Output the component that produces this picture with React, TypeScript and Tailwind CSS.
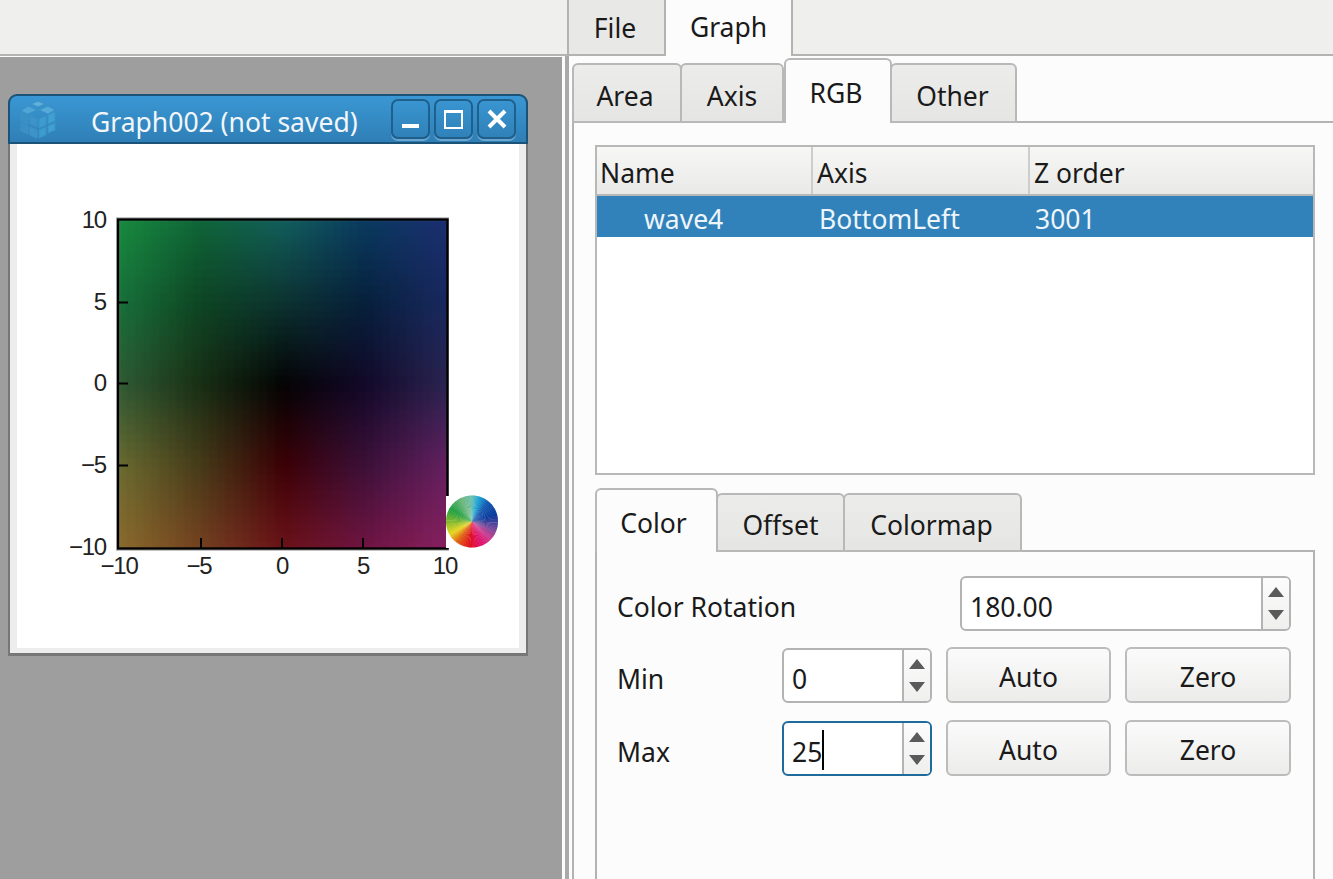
import type { ReactNode } from "react";

// colour samples of the plot, rows from y=10 down to y=-10, cols x=-10..10
const samples = [
  ["#178a3e", "#0f6538", "#125e5c", "#0a3a60", "#1a2e70"],
  ["#17703a", "#0d4523", "#0c3330", "#06203c", "#18285e"],
  ["#2f5a34", "#182e14", "#030303", "#120828", "#2a2450"],
  ["#6a6a30", "#463a18", "#3c0005", "#3c1038", "#642060"],
  ["#8a6a2c", "#74401f", "#6b1218", "#701442", "#87205f"],
];

function toRgb(hex: string) {
  return [1, 3, 5].map((i) => parseInt(hex.slice(i, i + 2), 16));
}

function mix(a: number[], b: number[], t: number) {
  return a.map((v, i) => v + (b[i] - v) * t);
}

function cellColor(u: number, v: number) {
  const cx = Math.min(u * 4, 3.999);
  const cy = Math.min(v * 4, 3.999);
  const ix = Math.floor(cx);
  const iy = Math.floor(cy);
  const top = mix(toRgb(samples[iy][ix]), toRgb(samples[iy][ix + 1]), cx - ix);
  const bot = mix(toRgb(samples[iy + 1][ix]), toRgb(samples[iy + 1][ix + 1]), cx - ix);
  const c = mix(top, bot, cy - iy).map(Math.round);
  return `rgb(${c[0]},${c[1]},${c[2]})`;
}

const CELLS = 40;
const heatCells = Array.from({ length: CELLS * CELLS }, (_, i) => ({
  x: i % CELLS,
  y: Math.floor(i / CELLS),
}));

// colour wheel stops, clockwise from the top
const wheelStops: [number, string][] = [
  [0, "#6fc0b4"],
  [15, "#1fa8d8"],
  [40, "#1458b0"],
  [75, "#0a3a9c"],
  [110, "#7a4a9a"],
  [135, "#d03a90"],
  [160, "#e0106a"],
  [185, "#e01020"],
  [215, "#e06010"],
  [240, "#e8d820"],
  [270, "#80b830"],
  [300, "#20a040"],
  [335, "#70b880"],
  [360, "#6fc0b4"],
];

function wheelColor(deg: number) {
  for (let i = 0; i < wheelStops.length - 1; i++) {
    const [a, ca] = wheelStops[i];
    const [b, cb] = wheelStops[i + 1];
    if (deg >= a && deg <= b) {
      const c = mix(toRgb(ca), toRgb(cb), (deg - a) / (b - a)).map(Math.round);
      return `rgb(${c[0]},${c[1]},${c[2]})`;
    }
  }
  return "#fff";
}

function wedgePath(cx: number, cy: number, r: number, from: number, to: number) {
  const p = (d: number) => {
    const a = ((d - 90) * Math.PI) / 180;
    return `${cx + r * Math.cos(a)} ${cy + r * Math.sin(a)}`;
  };
  return `M${cx} ${cy}L${p(from)}A${r} ${r} 0 0 1 ${p(to)}Z`;
}

function Plot() {
  const xLabels = [
    { x: 119, t: "−10" },
    { x: 199, t: "−5" },
    { x: 282, t: "0" },
    { x: 363, t: "5" },
    { x: 445, t: "10" },
  ];
  const yLabels = [
    { y: 228, t: "10" },
    { y: 310, t: "5" },
    { y: 391, t: "0" },
    { y: 473, t: "−5" },
    { y: 555, t: "−10" },
  ];
  return (
    <svg viewBox="17 144 503 504" className="block w-[503px] h-[504px]">
      <defs>
        <filter id="soft" x="-5%" y="-5%" width="110%" height="110%" colorInterpolationFilters="sRGB">
          <feGaussianBlur stdDeviation="1.6" />
        </filter>
        <filter id="softWheel" colorInterpolationFilters="sRGB">
          <feGaussianBlur stdDeviation="0.6" />
        </filter>
        <clipPath id="frame">
          <rect x="118" y="219" width="330" height="330" />
        </clipPath>
      </defs>
      <rect x="116" y="217" width="333" height="334" fill="#c4c4c4" />
      <g clipPath="url(#frame)">
        <g filter="url(#soft)" shapeRendering="crispEdges">
          {heatCells.map((c) => (
            <rect
              key={`${c.x}-${c.y}`}
              x={118 + c.x * 8.25}
              y={219 + c.y * 8.25}
              width="9"
              height="9"
              fill={cellColor((c.x + 0.5) / CELLS, (c.y + 0.5) / CELLS)}
            />
          ))}
        </g>
      </g>
      <rect x="118" y="219.5" width="329.5" height="329" fill="none" stroke="#000" strokeWidth="2.4" />
      {[302.5, 383.5, 465.5].map((y) => (
        <line key={y} x1="118" x2="128" y1={y} y2={y} stroke="#000" strokeWidth="2" />
      ))}
      {[201, 282, 363].map((x) => (
        <line key={x} x1={x} x2={x} y1="538" y2="549" stroke="#000" strokeWidth="2" />
      ))}
      <rect x="446" y="496" width="54" height="52" fill="#fff" />
      <g filter="url(#softWheel)">
        {Array.from({ length: 90 }, (_, i) => (
          <path key={i} d={wedgePath(472, 521.5, 26, i * 4, i * 4 + 5)} fill={wheelColor(i * 4 + 2)} />
        ))}
      </g>
      <g fontFamily="'Liberation Sans', sans-serif" fontSize="24" fill="#222">
        {yLabels.map((l) => (
          <text key={l.t} x="106" y={l.y} textAnchor="end" letterSpacing="-1.2">
            {l.t}
          </text>
        ))}
        {xLabels.map((l) => (
          <text key={l.t} x={l.x} y="574" textAnchor="middle" letterSpacing="-1.2">
            {l.t}
          </text>
        ))}
      </g>
    </svg>
  );
}

function WinButton({ children }: { children: ReactNode }) {
  return (
    <div className="w-[39px] h-[40px] rounded-[7px] border-2 border-[#1f5f8c] shadow-[0_2px_0_#6aa6cf] flex items-center justify-center">
      {children}
    </div>
  );
}

function GraphWindow() {
  return (
    <div className="w-[520px] ml-[8px] mt-[37px]">
      <div className="h-[50px] rounded-t-[9px] border-2 border-[#1a5278] bg-gradient-to-b from-[#3a97d3] to-[#2f7fb6] flex items-center pl-[10px] pr-[10px]">
        <svg viewBox="0 0 36 40" className="w-[36px] h-[40px] shrink-0">
          <g fill="#4aa3d4" stroke="#3b92c6" strokeWidth="1">
            <path d="M18 2l7 3-7 3-7-3z" fill="#5fb0da" />
            <path d="M8 7l9 4-9 4-7-3z" fill="#4fa6d6" />
            <path d="M28 7l7 4-7 4-9-4z" fill="#55aad8" />
            <path d="M1 13l7 3v9l-7-3zM1 24l7 3v8l-7-3z" fill="#3a8fc4" />
            <path d="M10 17l7 3v8l-7-3zM10 28l7 3v8l-7-3z" fill="#3e94c8" />
            <path d="M19 20l7-3v9l-7 3zM19 31l7-3v8l-7 3z" fill="#3d9ccf" />
            <path d="M28 16l7-3v9l-7 3zM28 27l7-3v7l-7 3z" fill="#41a0d2" />
          </g>
        </svg>
        <span className="ml-[35px] text-[26.5px] leading-none text-[#f2f6fa] whitespace-nowrap pt-[6px]">Graph002 (not saved)</span>
        <div className="ml-auto flex gap-[4px]">
          <WinButton>
            <span className="block w-[17px] h-[4px] bg-white mt-[14px]" />
          </WinButton>
          <WinButton>
            <span className="block w-[19px] h-[19px] border-2 border-white border-t-[3px]" />
          </WinButton>
          <WinButton>
            <svg viewBox="0 0 20 20" className="w-[20px] h-[20px]">
              <path d="M2 2L18 18M18 2L2 18" stroke="#fff" strokeWidth="4" />
            </svg>
          </WinButton>
        </div>
      </div>
      <div className="border-2 border-t-0 border-b-[3px] border-[#777] bg-[#ededed] px-[7px] pb-[5px]">
        <div className="bg-white h-[504px]">
          <Plot />
        </div>
      </div>
    </div>
  );
}

function OuterTab({ label, active, width }: { label: string; active?: boolean; width: string }) {
  return (
    <div
      className={`${width} flex items-center justify-center text-[26.5px] leading-none text-[#1a1a1a] h-[56px] ${
        active ? "bg-[#fcfcfc] border-r-2 border-[#b3b3b3] pb-[2px]" : "bg-[#e8e8e7] border-r-2 border-b-2 border-[#b3b3b3] pr-[3px] pt-[2px]"
      }`}
    >
      {label}
    </div>
  );
}

function PaneTab({ label, active, width, low, pr }: { label: string; active?: boolean; width: string; low?: boolean; pr?: string }) {
  const size = active ? (low ? "h-[64px]" : "h-[65px]") : low ? "h-[59px]" : "h-[60px]";
  return (
    <div
      className={`${width} ${size} ${pr ?? ""} relative -mb-[2px] flex items-center justify-center rounded-t-[6px] border-2 text-[26.5px] leading-none text-[#1a1a1a] border-[#b8b8b8] ${
        active ? "bg-[#fcfcfc] border-b-0 z-10 pt-[4px]" : "bg-gradient-to-b from-[#ececeb] to-[#e5e5e4] -ml-[2px] first:ml-0 pt-[6px]"
      }`}
    >
      {label}
    </div>
  );
}

function SpinArrows() {
  return (
    <div className="w-[28px] shrink-0 border-l-2 border-[#b3b3b3] bg-gradient-to-b from-[#fcfcfc] to-[#efefee] flex flex-col items-center justify-center gap-[13px]">
      <svg viewBox="0 0 16 10" className="w-[16px] h-[10px]">
        <path d="M8 0L16 10H0Z" fill="#5a5a5a" />
      </svg>
      <svg viewBox="0 0 16 10" className="w-[16px] h-[10px]">
        <path d="M8 10L16 0H0Z" fill="#5a5a5a" />
      </svg>
    </div>
  );
}

function SpinBox({ value, width, focused, caret }: { value: string; width: string; focused?: boolean; caret?: boolean }) {
  return (
    <div
      className={`${width} h-[55px] shrink-0 flex rounded-[6px] border-2 overflow-hidden bg-white ${
        focused ? "border-[#1f6b9c]" : "border-[#b3b3b3]"
      }`}
    >
      <div className="flex-1 flex items-center pl-[8px] pt-[7px] text-[26.5px] leading-none text-[#1a1a1a]">
        {value}
        {caret && <span className="inline-block w-[2px] h-[40px] bg-black -mt-[5px]" />}
      </div>
      <SpinArrows />
    </div>
  );
}

function PushButton({ label, width }: { label: string; width: string }) {
  return (
    <div className={`${width} h-[56px] rounded-[6px] border-2 border-[#bcbcbc] bg-gradient-to-b from-[#fbfbfb] to-[#ececeb] flex items-center justify-center text-[26.5px] leading-none text-[#1a1a1a] pt-[4px]`}>
      {label}
    </div>
  );
}

function ValueRow({ label, value, focused }: { label: string; value: string; focused?: boolean }) {
  return (
    <div className="flex items-end">
      <div className="w-[165px] h-[55px] flex items-center text-[26.5px] leading-none text-[#1a1a1a] pt-[7px]">{label}</div>
      <SpinBox value={value} width="w-[150px]" focused={focused} caret={focused} />
      <div className="ml-[14px] flex gap-[14px]">
        <PushButton label="Auto" width="w-[165px]" />
        <PushButton label="Zero" width="w-[166px]" />
      </div>
    </div>
  );
}

function WaveTable() {
  const cols = ["w-[216px]", "w-[217px]", "flex-1"];
  const head = ["Name", "Axis", "Z order"];
  const headPad = ["pl-[3px]", "pl-[4px]", "pl-[4px]"];
  const row = ["wave4", "BottomLeft", "3001"];
  const rowPad = ["pl-[47px]", "pl-[6px]", "pl-[5px]"];
  return (
    <div className="w-[720px] h-[330px] border-2 border-[#b8b8b8] bg-white text-[26.5px] leading-none">
      <div className="h-[49px] flex border-b-2 border-[#b8b8b8] bg-gradient-to-b from-[#f7f7f6] to-[#e9e9e8] text-[#1a1a1a]">
        {head.map((h, i) => (
          <div key={h} className={`${cols[i]} ${headPad[i]} pt-[6px] flex items-center border-r-2 border-[#cdcdcd] last:border-r-0`}>
            {h}
          </div>
        ))}
      </div>
      <div className="h-[41px] flex items-center bg-[#3182ba] text-[#eef5fa]">
        {row.map((c, i) => (
          <div key={c} className={`${cols[i]} ${rowPad[i]} pt-[6px]`}>
            {c}
          </div>
        ))}
      </div>
    </div>
  );
}

export default function App() {
  return (
    <div className="w-[1333px] h-[879px] overflow-hidden flex flex-col bg-[#fcfcfc] font-['Noto_Sans',sans-serif]">
      {/* barra de arriba con las pestañas File / Graph */}
      <div className="h-[56px] shrink-0 flex bg-[#efefed]">
        <div className="w-[569px] border-b-2 border-[#b3b3b3] border-r-2" />
        <OuterTab label="File" width="w-[97px]" />
        <OuterTab label="Graph" active width="w-[127px]" />
        <div className="flex-1 border-b-2 border-[#b3b3b3]" />
      </div>

      <div className="flex-1 flex min-h-0">
        {/* area de ventanas */}
        <div className="w-[562px] shrink-0 bg-[#9e9e9e] border-t border-[#fcfcfc]">
          <GraphWindow />
        </div>
        <div className="w-[7px] shrink-0 bg-[#fcfcfc] flex justify-end">
          <div className="w-[4px] bg-[#a9a9a9]" />
        </div>

        {/* panel derecho */}
        <div className="flex-1 min-w-0 pl-[3px] pt-[2px] flex flex-col">
          <div className="flex items-end h-[63px] shrink-0">
            <PaneTab label="Area" width="w-[110px]" pr="pr-[4px]" />
            <PaneTab label="Axis" width="w-[104px]" />
            <PaneTab label="RGB" active width="w-[108px]" pr="pr-[4px]" />
            <PaneTab label="Other" width="w-[127px]" pr="pr-[2px]" />
          </div>
          <div className="flex-1 border-t-2 border-l-2 border-[#b3b3b3] pl-[21px] pt-[22px]">
            <WaveTable />

            <div className="mt-[13px] flex items-end h-[62px] w-[720px]">
              <PaneTab label="Color" active low width="w-[123px]" pr="pr-[6px]" />
              <PaneTab label="Offset" low width="w-[129px]" />
              <PaneTab label="Colormap" low width="w-[179px]" pr="pr-[2px]" />
            </div>
            <div className="w-[720px] h-[400px] border-2 border-[#b3b3b3] pt-[24px] pl-[20px]">
              <div className="flex items-center w-[674px]">
                <div className="flex-1 text-[26.5px] leading-none text-[#1a1a1a] pt-[8px]">Color Rotation</div>
                <SpinBox value="180.00" width="w-[331px]" />
              </div>
              <div className="mt-[16px] w-[674px]">
                <ValueRow label="Min" value="0" />
              </div>
              <div className="mt-[17px] w-[674px]">
                <ValueRow label="Max" value="25" focused />
              </div>
            </div>
          </div>
        </div>
      </div>
    </div>
  );
}
